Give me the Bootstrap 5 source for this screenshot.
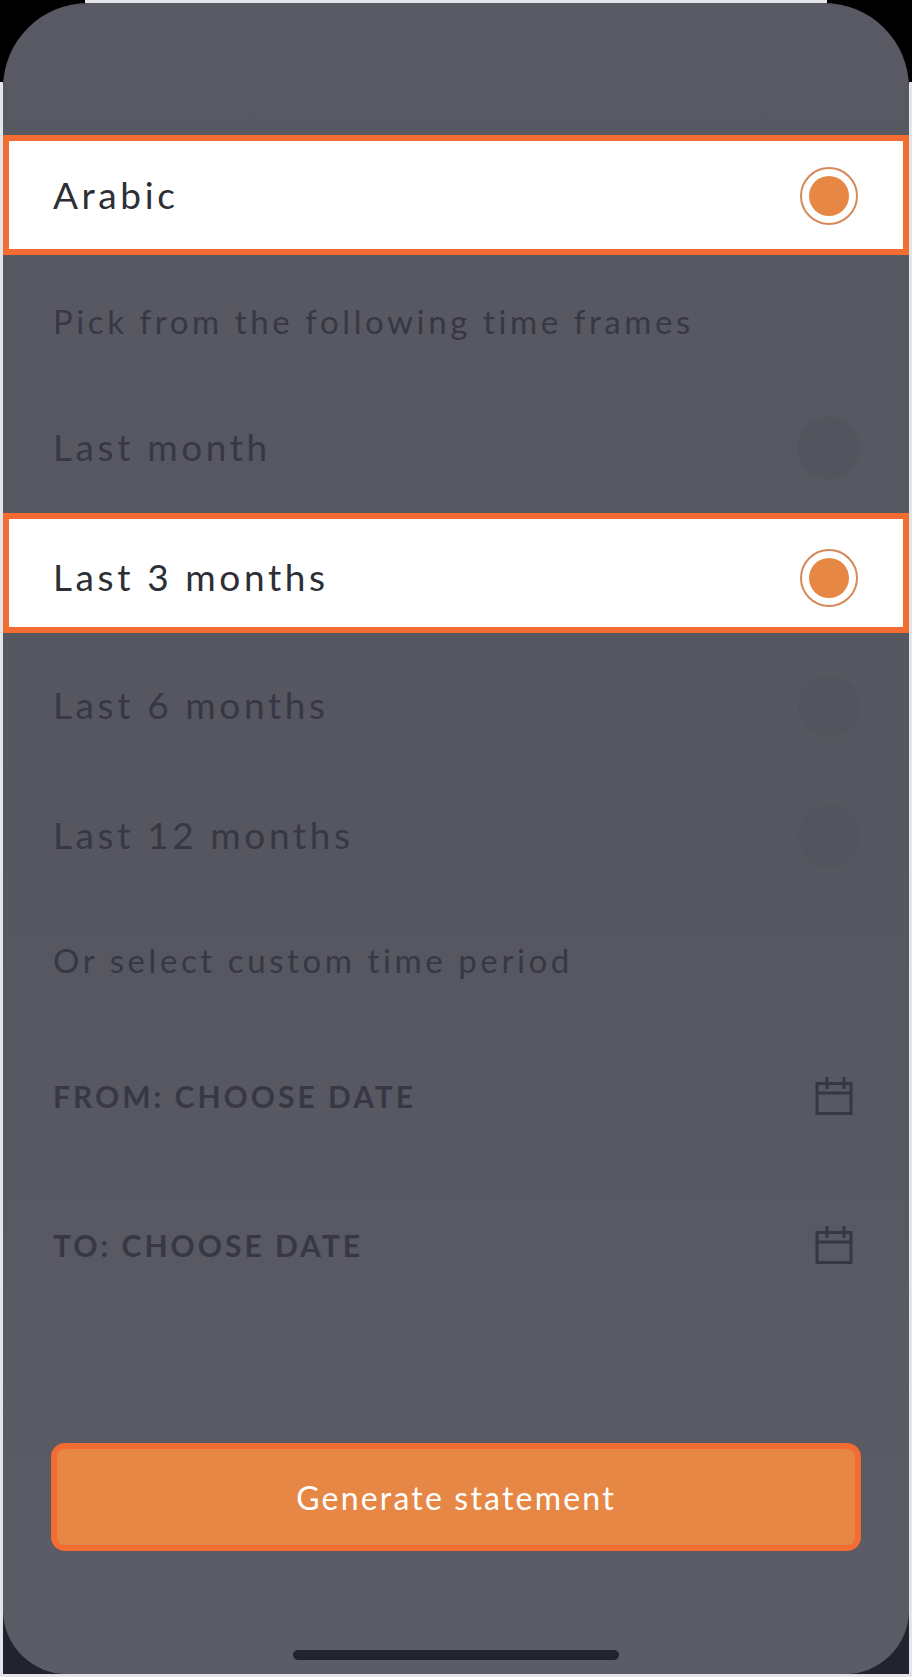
<!DOCTYPE html>
<html lang="en">
<head>
    <meta charset="UTF-8">
    <meta name="viewport" content="width=device-width">
    <link href="https://cdn.jsdelivr.net/npm/bootstrap@5.3.3/dist/css/bootstrap.min.css" rel="stylesheet">
    <title>Statement</title>
    <style>
        html, body { height: 100%; background: #e4e5ea; }
        body { font-family: "Lato", "Liberation Sans", sans-serif; overflow: hidden; }
        .shell {
            height: 1677px; padding: 3px;
            background:
                linear-gradient(#000, #000) left top / 85px 82px no-repeat,
                linear-gradient(#000, #000) right top / 85px 82px no-repeat,
                #e4e5ea;
        }
        .corners { height: 100%; background: linear-gradient(#000 50%, #23232f 50%); }
        .panel { height: 100%; background: linear-gradient(#585963, #55565f 50%, #5b5c65); border-radius: 85px 85px 64px 64px; padding-top: 132px; }
        .opt-row { height: 60px; padding: 0 50px; color: #373844; font-size: 37px; letter-spacing: 3.6px; }
        .hint-row { font-size: 33px; }
        .opt-on { height: 120px; padding: 0 44px; background: #fff; border: 6px solid #f36c31; color: #2e2f36; }
        .opt-low { padding-top: 7px; }
        .dot-off { width: 62px; height: 62px; border-radius: 50%; background: #53545d; margin-right: -1px; margin-top: 1px; }
        .dot-on { width: 58px; height: 58px; border-radius: 50%; border: 2px solid #d48a5a; padding: 7px; margin-right: 1px; margin-top: 2px; }
        .dot-on span { display: block; width: 100%; height: 100%; border-radius: 50%; background: #e78745; }
        .date-label { font-size: 30px; font-weight: 700; letter-spacing: 3px; }
        .cal-icon { width: 38px; height: 40px; margin-right: 6px; }
        .mt-pick { margin-top: 37px; }
        .mt-month { margin-top: 65px; }
        .mt-three { margin-top: 36px; }
        .mt-six { margin-top: 42px; }
        .mt-twelve { margin-top: 70px; }
        .mt-custom { margin-top: 66px; }
        .mt-from { margin-top: 75px; }
        .mt-to { margin-top: 89px; }
        .gen-btn { display: block; width: 810px; height: 108px; margin: 168px 0 0 48px; padding-top: 8px; background: #e78745; border: 6px solid #f36c31; border-radius: 14px; color: #fff; font-size: 32px; letter-spacing: 2.2px; }
        .gen-btn:hover { background: #e78745; border-color: #f36c31; color: #fff; }
        .home-bar { width: 326px; height: 10px; margin: 99px auto 0; background: #23232f; border-radius: 5px; }
    </style>
</head>
<body>
<div class="shell">
    <div class="corners">
        <div class="panel">
            <div class="opt-row opt-on d-flex align-items-center justify-content-between">
                <span>Arabic</span>
                <div class="dot-on"><span></span></div>
            </div>
            <div class="opt-row hint-row mt-pick d-flex align-items-center">Pick from the following time frames</div>
            <div class="opt-row mt-month d-flex align-items-center justify-content-between">
                <span>Last month</span>
                <div class="dot-off"></div>
            </div>
            <div class="opt-row opt-on opt-low mt-three d-flex align-items-center justify-content-between">
                <span>Last 3 months</span>
                <div class="dot-on"><span></span></div>
            </div>
            <div class="opt-row mt-six d-flex align-items-center justify-content-between">
                <span>Last 6 months</span>
                <div class="dot-off"></div>
            </div>
            <div class="opt-row mt-twelve d-flex align-items-center justify-content-between">
                <span>Last 12 months</span>
                <div class="dot-off"></div>
            </div>
            <div class="opt-row hint-row mt-custom d-flex align-items-center">Or select custom time period</div>
            <div class="opt-row mt-from d-flex align-items-center justify-content-between">
                <span class="date-label">FROM: CHOOSE DATE</span>
                <svg class="cal-icon" viewBox="0 0 38 40" fill="none" stroke="#363744" stroke-width="3"><path d="M2 7.5H36V37.5H2ZM2 17H36M12 1V13M29 1V13"/></svg>
            </div>
            <div class="opt-row mt-to d-flex align-items-center justify-content-between">
                <span class="date-label">TO: CHOOSE DATE</span>
                <svg class="cal-icon" viewBox="0 0 38 40" fill="none" stroke="#363744" stroke-width="3"><path d="M2 7.5H36V37.5H2ZM2 17H36M12 1V13M29 1V13"/></svg>
            </div>
            <button class="btn gen-btn" type="button">Generate statement</button>
            <div class="home-bar"></div>
        </div>
    </div>
</div>
<script src="https://cdn.jsdelivr.net/npm/bootstrap@5.3.3/dist/js/bootstrap.bundle.min.js"></script>
</body>
</html>
